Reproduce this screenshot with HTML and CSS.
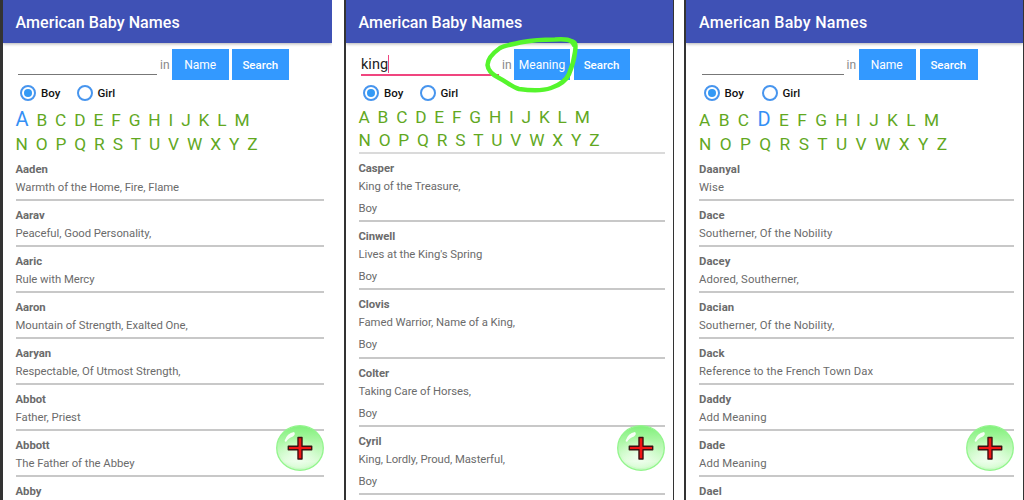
FILE: index.html
```html
<!DOCTYPE html>
<html lang="en">
<head>
  <meta charset="UTF-8">
  <meta name="viewport" content="width=device-width, initial-scale=1.0">
  <title>American Baby Names</title>
  <link rel="stylesheet" href="styles.css">
</head>
<body>
  <!-- Shared artwork for the add button -->
  <svg class="defs" width="0" height="0" aria-hidden="true">
    <defs>
      <linearGradient id="bubble" x1="0" y1="0" x2="0" y2="1">
        <stop offset="0" stop-color="#80f07a"/>
        <stop offset="0.4" stop-color="#b2f8ac"/>
        <stop offset="0.8" stop-color="#dcfdd8"/>
        <stop offset="1" stop-color="#c4fabf"/>
      </linearGradient>
      <radialGradient id="glow" cx="0.45" cy="0.7" r="0.5">
        <stop offset="0" stop-color="#fff" stop-opacity="0.65"/>
        <stop offset="1" stop-color="#fff" stop-opacity="0"/>
      </radialGradient>
      <symbol id="add" viewBox="0 0 48 46" preserveAspectRatio="none">
        <ellipse cx="24" cy="23" rx="23.3" ry="22.3" fill="url(#bubble)" stroke="#93f58d" stroke-width="1.3"/>
        <ellipse cx="24" cy="23" rx="21" ry="20" fill="url(#glow)"/>
        <path d="M8.500 16 Q11 8 18 7 Q20 9 17 11.500 Q12 13 10 17 Z" fill="#fff" opacity="0.9"/>
        <path d="M22 12.500h4v8.700h9.700v3.600h-9.700v9.200h-4v-9.200h-9.700v-3.600h9.700z" fill="#f01414" stroke="#3a1010" stroke-width="1.400" stroke-linejoin="round"/>
      </symbol>
    </defs>
  </svg>

  <div class="screens">
    <!-- Browse by letter A -->
    <div class="screen screen-first">
      <div class="app-bar"><h1 class="app-title">American Baby Names</h1></div>
      <div class="search-row">
        <div class="search-input"></div>
        <span class="search-in">in</span>
        <button class="btn btn-field">Name</button>
        <button class="btn btn-search">Search</button>
      </div>
      <div class="gender-row">
        <span class="radio checked"></span><span class="radio-label">Boy</span>
        <span class="radio"></span><span class="radio-label">Girl</span>
      </div>
      <div class="letters">
        <div class="letter-row"><span class="active">A</span><span>B</span><span>C</span><span>D</span><span>E</span><span>F</span><span>G</span><span>H</span><span>I</span><span>J</span><span>K</span><span>L</span><span>M</span></div>
        <div class="letter-row"><span>N</span><span>O</span><span>P</span><span>Q</span><span>R</span><span>S</span><span>T</span><span>U</span><span>V</span><span>W</span><span>X</span><span>Y</span><span>Z</span></div>
      </div>
      <div class="names">
        <div class="name-item"><h2>Aaden</h2><p>Warmth of the Home, Fire, Flame</p></div>
        <div class="name-item"><h2>Aarav</h2><p>Peaceful, Good Personality,</p></div>
        <div class="name-item"><h2>Aaric</h2><p>Rule with Mercy</p></div>
        <div class="name-item"><h2>Aaron</h2><p>Mountain of Strength, Exalted One,</p></div>
        <div class="name-item"><h2>Aaryan</h2><p>Respectable, Of Utmost Strength,</p></div>
        <div class="name-item"><h2>Abbot</h2><p>Father, Priest</p></div>
        <div class="name-item"><h2>Abbott</h2><p>The Father of the Abbey</p></div>
        <div class="name-item"><h2>Abby</h2></div>
      </div>
      <svg class="fab"><use href="#add"/></svg>
    </div>

    <!-- Search by meaning -->
    <div class="screen screen-search">
      <div class="app-bar"><h1 class="app-title">American Baby Names</h1></div>
      <div class="search-row">
        <div class="search-input focused">king<span class="caret"></span></div>
        <span class="search-in">in</span>
        <button class="btn btn-field">Meaning</button>
        <button class="btn btn-search">Search</button>
      </div>
      <div class="gender-row">
        <span class="radio checked"></span><span class="radio-label">Boy</span>
        <span class="radio"></span><span class="radio-label">Girl</span>
      </div>
      <div class="letters">
        <div class="letter-row"><span>A</span><span>B</span><span>C</span><span>D</span><span>E</span><span>F</span><span>G</span><span>H</span><span>I</span><span>J</span><span>K</span><span>L</span><span>M</span></div>
        <div class="letter-row"><span>N</span><span>O</span><span>P</span><span>Q</span><span>R</span><span>S</span><span>T</span><span>U</span><span>V</span><span>W</span><span>X</span><span>Y</span><span>Z</span></div>
      </div>
      <div class="names">
        <div class="name-item"><h2>Casper</h2><p>King of the Treasure,</p><p class="gender">Boy</p></div>
        <div class="name-item"><h2>Cinwell</h2><p>Lives at the King's Spring</p><p class="gender">Boy</p></div>
        <div class="name-item"><h2>Clovis</h2><p>Famed Warrior, Name of a King,</p><p class="gender">Boy</p></div>
        <div class="name-item"><h2>Colter</h2><p>Taking Care of Horses,</p><p class="gender">Boy</p></div>
        <div class="name-item"><h2>Cyril</h2><p>King, Lordly, Proud, Masterful,</p><p class="gender">Boy</p></div>
      </div>
      <svg class="fab"><use href="#add"/></svg>
      <!-- Hand-drawn ring around the field button -->
      <svg class="marker" viewBox="0 0 96 58">
        <path d="M89 9 C87 3 80 3 70 3.500 C58 3.500 48 4 38 6 C29 8 20 9 15 12 C8 17 2.500 23 2.500 29 C3 35 8 39 14 42 C22 46 27 51 34 53 C45 54.500 59 54.500 66 52 C75 49 81 45 84 38 C87 31 89 25 90 16 C91 9 91 6 86 5"/>
      </svg>
    </div>

    <!-- Browse by letter D -->
    <div class="screen screen-last">
      <div class="app-bar"><h1 class="app-title">American Baby Names</h1></div>
      <div class="search-row">
        <div class="search-input"></div>
        <span class="search-in">in</span>
        <button class="btn btn-field">Name</button>
        <button class="btn btn-search">Search</button>
      </div>
      <div class="gender-row">
        <span class="radio checked"></span><span class="radio-label">Boy</span>
        <span class="radio"></span><span class="radio-label">Girl</span>
      </div>
      <div class="letters">
        <div class="letter-row"><span>A</span><span>B</span><span>C</span><span class="active">D</span><span>E</span><span>F</span><span>G</span><span>H</span><span>I</span><span>J</span><span>K</span><span>L</span><span>M</span></div>
        <div class="letter-row"><span>N</span><span>O</span><span>P</span><span>Q</span><span>R</span><span>S</span><span>T</span><span>U</span><span>V</span><span>W</span><span>X</span><span>Y</span><span>Z</span></div>
      </div>
      <div class="names">
        <div class="name-item"><h2>Daanyal</h2><p>Wise</p></div>
        <div class="name-item"><h2>Dace</h2><p>Southerner, Of the Nobility</p></div>
        <div class="name-item"><h2>Dacey</h2><p>Adored, Southerner,</p></div>
        <div class="name-item"><h2>Dacian</h2><p>Southerner, Of the Nobility,</p></div>
        <div class="name-item"><h2>Dack</h2><p>Reference to the French Town Dax</p></div>
        <div class="name-item"><h2>Daddy</h2><p>Add Meaning</p></div>
        <div class="name-item"><h2>Dade</h2><p>Add Meaning</p></div>
        <div class="name-item"><h2>Dael</h2></div>
      </div>
      <svg class="fab"><use href="#add"/></svg>
    </div>
  </div>
</body>
</html>
```
FILE: styles.css
```css
* {
  margin: 0;
  padding: 0;
  box-sizing: border-box;
}

body {
  font-family: Roboto, "Liberation Sans", sans-serif;
  background: #fff;
  color: #6b6b6b;
  overflow: hidden;
}

.defs {
  display: block;
}

.screens {
  display: flex;
  justify-content: space-between;
  width: 1024px;
  height: 500px;
}

.screen {
  position: relative;
  height: 500px;
  overflow: hidden;
  border-left: 2px solid #333;
}

.screen-first {
  width: 332px;
  border-left-width: 3px;
  --inset: 12.500px;
  --right: 8px;
  --field: 139px;
  --btn: 56.500px;
  --spacing: -0.03px;
  --title-spacing: 0.08px;
  --letter-gap: 7.900px;
}

.screen-search {
  width: 330px;
  margin-left: 2px;
  border-right: 1px solid #333;
  --inset: 12.500px;
  --right: 8px;
  --field: 138px;
  --btn: 56px;
  --spacing: -0.05px;
  --title-spacing: 0.05px;
  --letter-gap: 7.800px;
}

.screen-last {
  width: 340px;
  border-right: 1px solid #333;
  --inset: 13px;
  --right: 9px;
  --field: 142px;
  --btn: 57.500px;
  --spacing: 0.1px;
  --title-spacing: 0.3px;
  --letter-gap: 8.400px;
}

.app-bar {
  height: 43px;
  padding: 1px var(--inset) 0;
  display: flex;
  align-items: center;
  background: #3f51b5;
  box-shadow: 0 1px 3px rgba(0, 0, 0, 0.3);
}

.app-title {
  font-size: 16px;
  font-weight: 500;
  color: #fff;
  letter-spacing: var(--title-spacing);
}

.search-row {
  display: flex;
  align-items: center;
  height: 31px;
  margin-top: 6px;
  padding-left: calc(var(--inset) + 2.500px);
}

.search-input {
  align-self: flex-start;
  display: flex;
  align-items: center;
  width: var(--field);
  height: 26px;
  border-bottom: 1px solid #777;
  font-size: 14.500px;
  color: #222;
}

.search-input.focused {
  height: 27px;
  padding-top: 5px;
  border-bottom: 2px solid #f0457f;
}

.caret {
  width: 1px;
  height: 18px;
  background: #f0457f;
}

.search-in {
  width: 15px;
  padding-left: 3px;
  font-size: 12px;
  color: #888;
}

.btn {
  width: var(--btn);
  height: 31px;
  margin-right: 3.500px;
  border: none;
  background: #3399ff;
  color: #fff;
  font-family: inherit;
  font-size: 12px;
}

.screen-last .btn {
  margin-right: 4px;
}

.btn-search {
  font-size: 11.500px;
  font-weight: 500;
}

.screen-last .btn-field,
.screen-last .btn-search {
  padding-right: 1px;
}

.gender-row {
  display: flex;
  align-items: center;
  height: 26px;
  padding-left: calc(var(--inset) + 4.500px);
}

.radio {
  display: flex;
  align-items: center;
  justify-content: center;
  width: 16px;
  height: 16px;
  border: 2px solid #4795ee;
  border-radius: 50%;
}

.radio.checked::after {
  content: "";
  width: 8px;
  height: 8px;
  border-radius: 50%;
  background: #3399f5;
}

.radio-label {
  width: 40.500px;
  padding-left: 5px;
  font-size: 11.500px;
  font-weight: 500;
  color: #111;
}

.screen-last .radio-label {
  width: 42px;
}

.letters {
  height: 51px;
  padding: 2px 0 0 var(--inset);
}

.screen-search .letters {
  height: 46px;
  padding-top: 0;
}

.letter-row {
  display: flex;
  align-items: baseline;
  gap: var(--letter-gap);
  height: 24px;
  font-size: 17.300px;
  line-height: 24px;
  color: #62a81f;
}

.screen-search .letter-row {
  height: 22.500px;
  line-height: 22px;
}

.letter-row .active {
  font-size: 20px;
  line-height: 22px;
  color: #3490f5;
}

.names {
  margin: -2px var(--right) 0 var(--inset);
}

.name-item {
  height: 46px;
  padding-top: 6px;
  border-bottom: 2px solid #c8c8c8;
}

.screen-search .names {
  margin-top: 0;
  border-top: 2px solid #dadada;
}

.screen-search .name-item {
  height: 68.200px;
}

.name-item h2,
.name-item p {
  font-size: 11.300px;
  line-height: 18px;
  letter-spacing: var(--spacing);
  white-space: nowrap;
}

.name-item h2 {
  font-weight: 700;
}

.name-item p {
  font-weight: 400;
}

.name-item .gender {
  margin-top: 4px;
}

/* Floating add button */
.fab {
  position: absolute;
  right: var(--right);
  top: 425px;
  width: 48px;
  height: 46px;
}

.marker {
  position: absolute;
  left: 139px;
  top: 36px;
  width: 96px;
  height: 58px;
  fill: none;
  stroke: #55f52c;
  stroke-width: 4.500;
  stroke-linecap: round;
}
```
